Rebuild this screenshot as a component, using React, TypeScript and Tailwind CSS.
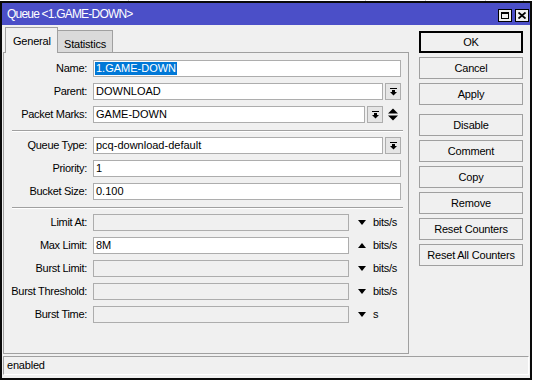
import React from "react";

const DropBtn = () => (
  <div className="ml-[2px] w-[16px] h-[17px] shrink-0 border border-[#adadad] bg-[#e5e5e5] flex items-center justify-center">
    <svg width="7" height="8" viewBox="0 0 7 8">
      <rect x="0" y="0" width="7" height="1" fill="#000" />
      <rect x="2" y="2" width="3" height="2" fill="#000" />
      <polygon points="0,4 7,4 3.5,7.5" fill="#000" />
    </svg>
  </div>
);

const Down = () => (
  <svg width="8" height="5" viewBox="0 0 8 5" className="shrink-0">
    <polygon points="0,0 8,0 4,5" fill="#000" />
  </svg>
);
const Up = () => (
  <svg width="8" height="5" viewBox="0 0 8 5" className="shrink-0">
    <polygon points="0,5 8,5 4,0" fill="#000" />
  </svg>
);

const Label = ({ children }: { children: React.ReactNode }) => (
  <div className="w-[84px] shrink-0 text-right pr-[1px] tracking-[-0.3px] whitespace-nowrap">{children}</div>
);

const Field = ({
  value,
  disabled,
  className,
  selected,
}: {
  value?: string;
  disabled?: boolean;
  className?: string;
  selected?: boolean;
}) => (
  <div
    className={
      "h-[17px] border border-[#adadad] flex items-center pl-[1px] overflow-hidden whitespace-nowrap " +
      (disabled ? "bg-[#f0f0f0] " : "bg-white ") +
      (className ?? "")
    }
  >
    {selected ? (
      <span className="bg-[#0078d7] text-white leading-[13px] px-px">{value}</span>
    ) : (
      <span className="pl-px">{value}</span>
    )}
  </div>
);

const Sep = () => <div className="ml-[8px] mr-[5px] h-[2px] border-t border-[#a0a0a0] border-b border-b-white mt-[7px] mb-[5px]" />;

const LimitRow = ({ label, value, up, unit }: { label: string; value?: string; up?: boolean; unit: string }) => (
  <div className="flex items-center h-[17px]">
    <Label>{label}</Label>
    <Field value={value} disabled={!value} className="ml-[5px] w-[256px] shrink-0" />
    <div className="ml-[9px]">{up ? <Up /> : <Down />}</div>
    <div className="ml-[7px] tracking-[-0.3px]">{unit}</div>
  </div>
);

const Btn = ({ children, def, className }: { children: React.ReactNode; def?: boolean; className?: string }) => (
  <div
    className={
      "w-[104px] h-[22px] flex items-center justify-center bg-[#f0f0f0] tracking-[-0.2px] " +
      (def ? "border-2 border-black " : "border border-[#a0a0a0] ") +
      (className ?? "")
    }
  >
    {children}
  </div>
);

export default function App() {
  return (
    <div className="relative w-[534px] h-[383px] bg-white overflow-hidden font-['Liberation_Sans',Arial,sans-serif] text-[11px] text-black">
      {/* background grid lines behind the window */}
      <div className="absolute top-0 left-[128px] w-px h-[3px] bg-[#d0d0d0]" />
      <div className="absolute top-0 left-[365px] w-px h-[3px] bg-[#d0d0d0]" />
      <div className="absolute top-0 left-[425px] w-px h-[3px] bg-[#d0d0d0]" />
      <div className="absolute top-0 left-[485px] w-px h-[3px] bg-[#d0d0d0]" />
      <div className="absolute top-0 left-[523px] w-px h-[3px] bg-[#d0d0d0]" />

      <div className="relative mt-[1px] w-[532px] h-[379px] border-2 border-[#0a0a0a] bg-[#f0f0f0] flex flex-col">
        {/* title bar */}
        <div className="h-[22px] shrink-0 bg-[#4b4fc8] flex items-center pl-[5px] pr-[1px]">
          <div className="text-white text-[12px] tracking-[-0.8px] flex-1">Queue &lt;1.GAME-DOWN&gt;</div>
          <div className="flex gap-[3px] items-center mt-[3px]">
            <div className="w-[14px] h-[13px] border border-black bg-[#f0f0f0] flex items-center justify-center">
              <div className="w-[8px] h-[7px] border border-black border-t-2" />
            </div>
            <div className="w-[14px] h-[13px] border border-black bg-[#f0f0f0] flex items-center justify-center">
              <svg width="8" height="7" viewBox="0 0 8 7">
                <path d="M0.5 0.5 L7.5 6.5 M7.5 0.5 L0.5 6.5" stroke="#000" strokeWidth="1.8" />
              </svg>
            </div>
          </div>
        </div>

        {/* body */}
        <div className="h-[329px] shrink-0 flex">
          <div className="ml-px w-[406px] flex flex-col">
            {/* tabs */}
            <div className="h-[27px] flex items-end pl-[2px] relative z-10">
              <div className="w-[53px] h-[26px] border border-[#a0a0a0] border-b-0 bg-[#f0f0f0] pl-[7px] pt-[5px] tracking-[-0.2px] -mb-px">
                General
              </div>
              <div className="w-[55px] h-[22px] border border-l-0 border-[#a0a0a0] border-b-0 bg-[#dadada] pl-[6px] pt-[5px] tracking-[-0.2px]">
                Statistics
              </div>
            </div>
            {/* panel */}
            <div className="h-[302px] border border-[#a0a0a0] pt-[7px] flex flex-col">
              <div className="flex flex-col gap-[6px]">
                <div className="flex items-center h-[17px]">
                  <Label>Name:</Label>
                  <Field value="1.GAME-DOWN" selected className="ml-[5px] w-[308px]" />
                </div>
                <div className="flex items-center h-[17px]">
                  <Label>Parent:</Label>
                  <Field value="DOWNLOAD" className="ml-[5px] w-[290px]" />
                  <DropBtn />
                </div>
                <div className="flex items-center h-[17px]">
                  <Label>Packet Marks:</Label>
                  <Field value="GAME-DOWN" className="ml-[5px] w-[272px]" />
                  <DropBtn />
                  <svg width="10" height="13" viewBox="0 0 10 13" className="ml-[5px]">
                    <polygon points="0,5.5 10,5.5 5,0.5" fill="#000" />
                    <polygon points="0,7.5 10,7.5 5,12.5" fill="#000" />
                  </svg>
                </div>
              </div>
              <Sep />
              <div className="flex flex-col gap-[6px]">
                <div className="flex items-center h-[17px]">
                  <Label>Queue Type:</Label>
                  <Field value="pcq-download-default" className="ml-[5px] w-[290px]" />
                  <DropBtn />
                </div>
                <div className="flex items-center h-[17px]">
                  <Label>Priority:</Label>
                  <Field value="1" className="ml-[5px] w-[308px]" />
                </div>
                <div className="flex items-center h-[17px]">
                  <Label>Bucket Size:</Label>
                  <Field value="0.100" className="ml-[5px] w-[308px]" />
                </div>
              </div>
              <Sep />
              <div className="flex flex-col gap-[6px]">
                <LimitRow label="Limit At:" unit="bits/s" />
                <LimitRow label="Max Limit:" value="8M" up unit="bits/s" />
                <LimitRow label="Burst Limit:" unit="bits/s" />
                <LimitRow label="Burst Threshold:" unit="bits/s" />
                <LimitRow label="Burst Time:" unit="s" />
              </div>
            </div>
          </div>

          {/* buttons */}
          <div className="ml-[10px] pt-[6px] flex flex-col gap-[4px]">
            <Btn def>OK</Btn>
            <Btn>Cancel</Btn>
            <Btn>Apply</Btn>
            <Btn className="mt-[5px]">Disable</Btn>
            <Btn>Comment</Btn>
            <Btn>Copy</Btn>
            <Btn>Remove</Btn>
            <Btn>Reset Counters</Btn>
            <Btn>Reset All Counters</Btn>
          </div>
        </div>

        {/* status bar */}
        <div className="mt-[2px] ml-px mr-px h-[19px] shrink-0 border border-[#a0a0a0] border-r-white border-b-white flex items-center pl-[3px] tracking-[-0.2px]">
          enabled
        </div>
      </div>
    </div>
  );
}
